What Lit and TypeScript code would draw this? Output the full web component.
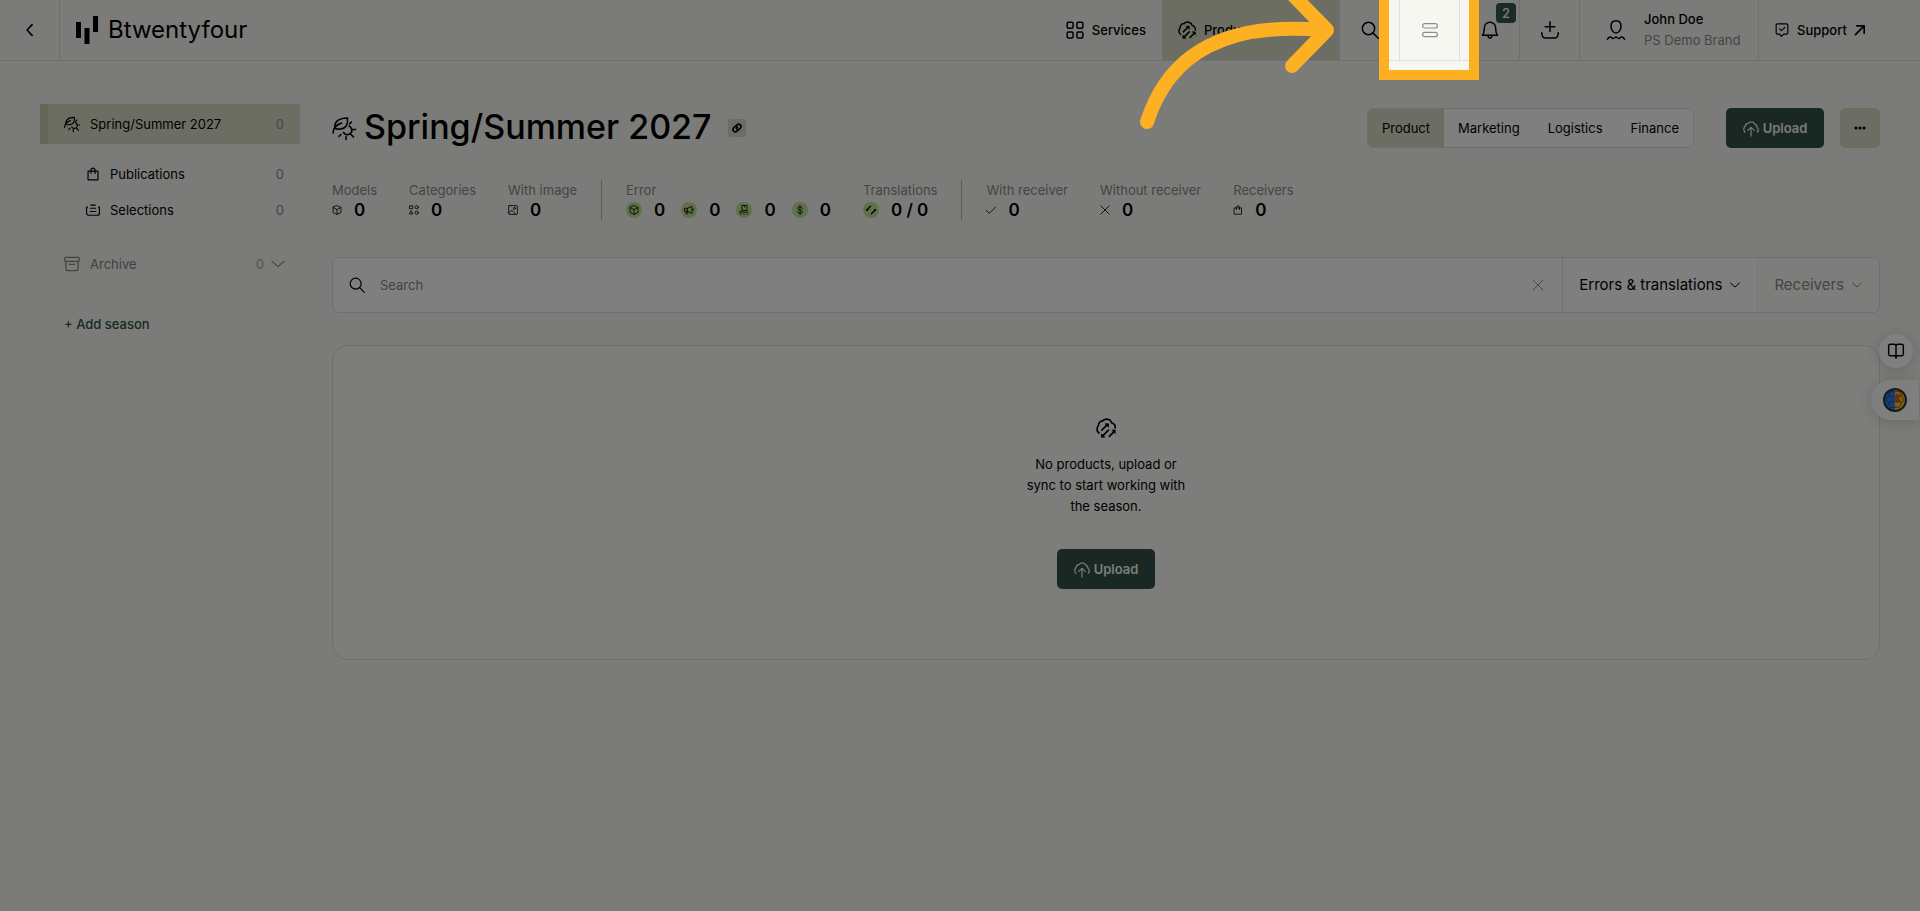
import { LitElement, html, css, svg } from "lit";
import { customElement, property } from "lit/decorators.js";

const shapes: Record<string, unknown> = {
  back: svg`<path d="M14.500 5.500 8.500 12l6 6.500" stroke-width="2"/>`,
  season: svg`<path d="M1 17c.2-5 3-8 8.500-10M3.500 12.500C1.500 7.500 5 2 15.500 2c.8 6-1.500 10.500-7 11-2 .2-3.500.3-5-.5z"/><path d="M17 10a4.500 4.500 0 1 1-5.500 6.500M17.500 8l2-2M20.500 13.500h3M14 20.500v3M19 18.500l2.500 2.500M9 18.500 7 20.500"/>`,
  bag: svg`<path d="M3.500 7h17v15h-17zM8.500 11V5.500a3.500 3.500 0 0 1 7 0V11"/>`,
  selection: svg`<path d="M2.500 7H1v10.500A3.500 3.500 0 0 0 4.500 21h15a3.500 3.500 0 0 0 3.500-3.500V7h-1.500M8 3.500h8M7.500 9h9M7.500 14.500h9"/>`,
  archive: svg`<rect x="1" y="2" width="22" height="6" rx="1.500"/><path d="M3 8v11a3 3 0 0 0 3 3h12a3 3 0 0 0 3-3V8M8.500 12.500h7"/>`,
  down: svg`<path d="m3 8 9 8 9-8"/>`,
  grid: svg`<rect x="1.500" y="1.500" width="8" height="8" rx="2"/><rect x="14.500" y="1.500" width="8" height="8" rx="2"/><rect x="1.500" y="14.500" width="8" height="8" rx="2"/><rect x="14.500" y="14.500" width="8" height="8" rx="2"/>`,
  sync: svg`<path d="M3.500 18A6 6 0 0 1 3 9a5 5 0 0 1 5-5.500 6.500 6.500 0 0 1 11 2.500 5 5 0 0 1 4 6M7 14.500l6-6M8 21.500l7-7M16 22l6-6"/><g fill="currentColor" stroke-width="1"><path d="M11.500 7H15v3.500zM6.500 19.500V23H10zM19.500 14.500H23V18z"/></g>`,
  search: svg`<circle cx="10" cy="10" r="8.200"/><path d="m16 16 7 7"/>`,
  rows: svg`<rect x="1" y="2.500" width="22" height="6.500" rx="3"/><rect x="1" y="15.500" width="22" height="6.500" rx="3"/>`,
  bell: svg`<path d="M2 19h20c-2.500-2.500-2-5-2.500-10a7.500 7.500 0 0 0-15 0C4 14 4.500 16.500 2 19zM9.500 20.500c.5 3 4.500 3 5 0"/>`,
  load: svg`<path d="M12 1v13M5.500 7.500h13M1 15.500c0 5 1.500 7 5 7h12c3.500 0 5-2 5-7"/>`,
  user: svg`<path d="M12 1c4.500 0 6.500 2.500 6.500 7s-3 9-6.500 9-6.500-4.500-6.500-9S7.500 1 12 1zM1 25c2-3.500 4-3.500 6-1.500 2 1.500 3 0 5-1.500 2 1.500 3 3 5 1.500 2-2 4-2 6 1.500"/>`,
  support: svg`<path d="M4 1.500h16a2 2 0 0 1 2 2V17a2 2 0 0 1-2 2h-5l-4 4-3-4H4a2 2 0 0 1-2-2V3.500a2 2 0 0 1 2-2z"/><path d="m8 10 3 3 6-5.500"/>`,
  out: svg`<path d="M1 23 22 2M4 2h18v18" stroke-width="4"/>`,
  upload: svg`<path d="M3 18.500A6.500 6.500 0 0 1 3.500 9 4.500 4.500 0 0 1 8 5a6 6 0 0 1 10 1.500 4.500 4.500 0 0 1 3 4.500 5 5 0 0 1 .5 7M12 24V11.500M7 15.500l5-4.500 5 4.500"/>`,
  dots: svg`<g fill="currentColor" stroke="none"><circle cx="4" cy="12" r="3"/><circle cx="12" cy="12" r="3"/><circle cx="20" cy="12" r="3"/></g>`,
  link: svg`<path stroke-width="4" d="M10 6.500 12.500 4c5-4 12 3 8 8l-3 3c-2.500 2-6 1-7-2M14 17.500 11.500 20c-5 4-12-3-8-8l3-3c2.500-2 6-1 7 2"/>`,
  box: svg`<path d="m12 1.500 9.500 4.500v12L12 22.500 2.500 18V6zM2.500 6l9.500 5 9.500-5M12 11v11.500"/>`,
  shapes: svg`<rect x="2" y="2" width="7" height="7"/><circle cx="18.500" cy="5.500" r="3.800"/><path d="m5.500 14.500 4 7h-8z"/><circle cx="18.500" cy="18.500" r="3.800"/>`,
  image: svg`<rect x="1.500" y="1.500" width="21" height="21" rx="1.500"/><circle cx="15.500" cy="8" r="2.500"/><path d="m3 19 6-7 9 9.500"/>`,
  horn: svg`<path d="M2 8h6l11-5v17L8 15H2zM8 8v7M5 15v6h4v-5M22 9v4"/>`,
  cart: svg`<path d="M8 1h11v12H8zM13.500 1v4M1 17h21M3 22h2M11 22h2M19 22h2M8 13l-4 4"/>`,
  dollar: svg`<path d="M18 8c-1-5-12-5-12 0s12 3 12 8-11 5-12 0M12 1v22"/>`,
  swap: svg`<path stroke-width="3" d="m2 12 9-9M13 21l9-9"/><g fill="currentColor"><circle cx="2.500" cy="12" r="1.500"/><circle cx="21.500" cy="12" r="1.500"/></g>`,
  check: svg`<path d="m1 13 7 7L23 5"/>`,
  cross: svg`<path d="m2 2 20 20M22 2 2 22"/>`,
  book: svg`<path stroke-width="2.200" d="M12 5c0-2-1-3-3-3H3.500C2 2 1 3 1 4.500v12C1 18 2 19 3.500 19H9c2 0 3 1 3 3 0-2 1-3 3-3h5.500c1.500 0 2.500-1 2.500-2.500v-12C23 3 22 2 20.500 2H15c-2 0-3 1-3 3zM12 5v18"/>`,
};

const icon = (name: string, size = "s16") => html`<svg
  class="icon ${size}" viewBox="0 0 24 ${name === "user" ? 26 : 24}" aria-hidden="true">${shapes[name]}</svg>`;

const base = css`
  * { box-sizing: border-box; }
  .icon { display: block; flex: none; fill: none; stroke: currentColor; stroke-width: 2; stroke-linecap: round; stroke-linejoin: round; overflow: visible; }
  .s10 { width: 10px; height: 10px; }
  .s12 { width: 12px; height: 12px; }
  .s14 { width: 14px; height: 14px; }
  .s16 { width: 16px; height: 16px; stroke-width: 1.8; }
  .s18 { width: 18px; height: 18px; }
  .s20 { width: 20px; height: 20px; }
  .s24 { width: 24px; height: 24px; stroke-width: 1.6; }
  button { font: inherit; color: inherit; border: 0; background: none; padding: 0; cursor: pointer; }
  a { color: inherit; text-decoration: none; }
`;

@customElement("top-bar")
class TopBar extends LitElement {
  static styles = [base, css`
    :host { display: block; }
    .bar { display: flex; height: 61px; border-bottom: 1px solid #dededc; font-weight: 500; }
    .cell { display: flex; align-items: center; justify-content: center; width: 60px; border-right: 1px solid #dededc; }
    .cell.tool { position: relative; }
    .logo { display: flex; align-items: center; gap: 10px; padding-left: 16px; font-size: 24px; font-weight: 400; margin-right: auto; }
    .mark { width: 22px; height: 28px; }
    .item { display: flex; align-items: center; gap: 8px; padding: 0 16px; }
    .current { background: #dbdcc7; width: 178px; border-right: 1px solid #dededc; }
    .rows { color: #8c8c8a; }
    .badge { position: absolute; top: 3px; right: 3px; width: 20px; height: 20px; border-radius: 4px; background: #36574c; color: #f7f8f3; line-height: 20px; text-align: center; }
    .account { display: flex; align-items: center; gap: 18px; width: 179px; padding: 0 16px 0 26px; border-right: 1px solid #dededc; text-align: left; line-height: 21px; white-space: nowrap; }
    .brand { color: #8a8a88; font-weight: 400; }
    .support { width: 161px; }
    .focus { position: absolute; z-index: 20; top: -10px; left: -21px; width: 100px; height: 90px; border: 10px solid #fdb022; box-shadow: 0 0 0 4000px rgba(0, 0, 0, 0.5); pointer-events: none; }
    .arrow { position: absolute; top: 0; right: 140px; width: 210px; height: 140px; overflow: visible; fill: none; stroke: #fdb022; stroke-width: 14; stroke-linecap: round; stroke-linejoin: round; }
  `];
  render() {
    return html`<header class="bar">
      <button class="cell" aria-label="Back">${icon("back", "s20")}</button>
      <a class="logo" href="#">
        <svg class="mark" viewBox="0 0 22 28" aria-hidden="true"><path d="M0 6h5v16H0zM8.500 12h5v16h-5zM17 0h5v16h-5z"/></svg>
        Btwentyfour
      </a>
      <a class="item" href="#">${icon("grid", "s18")}Services</a>
      <a class="item current" href="#">${icon("sync", "s18")}Products</a>
      <button class="cell" aria-label="Search">${icon("search", "s18")}</button>
      <div class="cell tool">
        <button class="rows" aria-label="Lists">${icon("rows", "s16")}</button>
        <div class="focus">
          <svg class="arrow" viewBox="0 0 210 140" aria-hidden="true"><path d="M28 122C51 50 111 22 203 30M173 -6l35 36-35 36"/></svg>
        </div>
      </div>
      <button class="cell tool" aria-label="Notifications">${icon("bell", "s18")}<span class="badge">2</span></button>
      <button class="cell" aria-label="Import">${icon("load", "s18")}</button>
      <button class="account">${icon("user", "s20")}<span>John Doe<br /><span class="brand">PS Demo Brand</span></span></button>
      <a class="item support" href="#">${icon("support", "s14")}Support${icon("out", "s10")}</a>
    </header>`;
  }
}

@customElement("season-nav")
class SeasonNav extends LitElement {
  static styles = [base, css`
    :host { display: block; width: 260px; flex: none; }
    .row { display: flex; align-items: center; gap: 10px; height: 36px; padding-right: 16px; }
    .season { height: 40px; padding-left: 16px; border-left: 8px solid #c6cdaa; background: #dbdcc7; margin-bottom: 12px; }
    .sub { padding-left: 46px; }
    .count { margin-left: auto; color: #8a8a88; }
    .archive { width: 100%; height: 40px; padding-left: 24px; padding-right: 14px; margin: 16px 0 20px; color: #82827f; }
    .archive .count { color: #a3a3a0; margin-right: -4px; }
    .add { height: 40px; padding-left: 24px; color: #2c5344; font-weight: 500; gap: 4px; }
  `];
  render() {
    return html`<nav>
      <a class="row season" href="#">${icon("season")}Spring/Summer 2027<span class="count">0</span></a>
      <a class="row sub" href="#">${icon("bag", "s14")}Publications<span class="count">0</span></a>
      <a class="row sub" href="#">${icon("selection", "s14")}Selections<span class="count">0</span></a>
      <button class="row archive">${icon("archive")}Archive<span class="count">0</span>${icon("down")}</button>
      <button class="row add">+ Add season</button>
    </nav>`;
  }
}

@customElement("season-stats")
class SeasonStats extends LitElement {
  static styles = [base, css`
    :host { display: block; }
    .stats, .group, .values, .value { display: flex; }
    .group { gap: 32px; }
    .group + .group { border-left: 1px solid #b4b4b0; margin-left: 24px; padding-left: 24px; }
    .stat { line-height: 20px; color: #8a8a88; white-space: nowrap; }
    .values { gap: 16px; }
    .value { align-items: center; gap: 12px; font-size: 17px; font-weight: 600; color: #000; }
    .dot { display: grid; place-items: center; width: 16px; height: 16px; border-radius: 50%; background: #bfe391; }
  `];
  render() {
    const groups = [
      [["Models", ["box"], "0"], ["Categories", ["shapes"], "0"], ["With image", ["image"], "0"]],
      [["Error", ["box", "horn", "cart", "dollar"], "0", true], ["Translations", ["swap"], "0 / 0", true]],
      [["With receiver", ["check"], "0"], ["Without receiver", ["cross"], "0"], ["Receivers", ["bag"], "0"]],
    ] as [string, string[], string, boolean?][][];
    return html`<div class="stats">${groups.map((g) => html`<div class="group">${g.map(([label, icons, value, dot]) => html`
      <div class="stat">${label}
        <div class="values">${icons.map((i) => html`<span class="value">${dot
          ? html`<span class="dot">${icon(i, "s10")}</span>` : icon(i, "s10")}${value}</span>`)}</div>
      </div>`)}</div>`)}</div>`;
  }
}

@customElement("upload-button")
class UploadButton extends LitElement {
  static styles = [base, css`
    :host { display: block; }
    .upload { display: flex; align-items: center; justify-content: center; gap: 4px; width: 98px; height: 40px; border-radius: 5px; background: #335145; color: #f7f8f3; font-weight: 600; }
  `];
  render() { return html`<button class="upload">${icon("upload")}Upload</button>`; }
}

@customElement("app-root")
class AppRoot extends LitElement {
  @property() tab = "Product";
  static styles = [base, css`
    :host { display: block; position: relative; min-height: 100vh; overflow: hidden; background: #f7f7f2; color: #000; font: 13px/20px Inter, "Liberation Sans", sans-serif; }
    .page { display: flex; gap: 32px; padding: 43px 40px 40px; }
    .main { flex: 1; min-width: 0; }
    .heading { display: flex; align-items: center; height: 48px; margin-bottom: 28px; }
    .title { margin: 0 16px 0 8px; font-size: 34px; line-height: 46px; padding-bottom: 2px; font-weight: 500; }
    .link { display: grid; place-items: center; width: 18px; height: 18px; border-radius: 2px; background: #dbdcc7; }
    .tabs { display: flex; height: 40px; margin-left: auto; border: 1px solid #dededc; border-radius: 6px; background: #fff; overflow: hidden; }
    .tab { padding: 0 14px; }
    .tab.on { background: #dbdcc7; }
    upload-button { margin: 0 16px 0 32px; }
    .more { display: grid; place-items: center; width: 40px; height: 40px; border-radius: 5px; background: #dbdcc7; }
    .filters { display: flex; height: 56px; margin: 37px 0 32px; border: 1px solid #dededf; border-radius: 7px; background: #fff; overflow: hidden; }
    .search { flex: 1; display: flex; align-items: center; gap: 15px; padding: 0 18px 0 16px; }
    .query { flex: 1; border: 0; outline: 0; padding: 0; background: none; font: inherit; }
    .query::placeholder { color: #85858a; opacity: 1; }
    .clear { color: #8a8a88; }
    .filter { display: flex; align-items: center; gap: 7px; padding: 0 16px; border-left: 1px solid #dededf; font-size: 15px; }
    .off { background: #fafaf7; color: #8a8a88; border-color: #efefed; }
    .panel { display: flex; flex-direction: column; align-items: center; padding: 72px 0 70px; border: 1px solid #dededc; border-radius: 16px; background: #fbfbf7; }
    .empty { width: 168px; margin: 16px 0 32px; line-height: 21px; text-align: center; }
    .panel upload-button { margin: 0; }
    .side { position: absolute; top: 334px; right: 0; display: flex; flex-direction: column; align-items: flex-end; gap: 12px; }
    .guide, .helper { display: grid; place-items: center; background: #fff; box-shadow: 0 2px 16px rgba(0, 0, 0, 0.16); }
    .guide { width: 34px; height: 34px; border-radius: 50%; margin-right: 7px; }
    .helper { width: 48px; height: 40px; border-radius: 20px 0 0 20px; margin-right: 1px; }
    .brain { width: 24px; height: 24px; }
  `];
  render() {
    return html`
      <top-bar></top-bar>
      <div class="page">
        <season-nav></season-nav>
        <main class="main">
          <div class="heading">
            ${icon("season", "s24")}
            <h1 class="title">Spring/Summer 2027</h1>
            <button class="link" aria-label="Copy link">${icon("link", "s10")}</button>
            <div class="tabs">${["Product", "Marketing", "Logistics", "Finance"].map((t) => html`
              <button class="tab ${t === this.tab ? "on" : ""}" @click=${() => (this.tab = t)}>${t}</button>`)}</div>
            <upload-button></upload-button>
            <button class="more" aria-label="More">${icon("dots", "s12")}</button>
          </div>
          <season-stats></season-stats>
          <div class="filters">
            <label class="search">${icon("search")}<input class="query" placeholder="Search" aria-label="Search" />
              <button class="clear" aria-label="Clear">${icon("cross", "s12")}</button></label>
            <button class="filter">Errors &amp; translations${icon("down", "s12")}</button>
            <button class="filter off">Receivers${icon("down", "s12")}</button>
          </div>
          <section class="panel">
            ${icon("sync", "s20")}
            <p class="empty">No products, upload or sync to start working with the season.</p>
            <upload-button></upload-button>
          </section>
        </main>
      </div>
      <div class="side">
        <button class="guide" aria-label="Guide">${icon("book")}</button>
        <button class="helper" aria-label="Assistant">
          <svg class="brain" viewBox="0 0 24 24" aria-hidden="true">
            <circle cx="12" cy="12" r="11" fill="#2f7fe8"/><path d="M12 1a11 11 0 0 1 0 22z" fill="#ffc21a"/>
            <path d="M12 7c4-3 6 1 4 4 4 1 1 5-4 3z" fill="#e8602a"/>
            <path d="M12 4c-4-2-7 1-6 4-3 1-3 6 0 7 0 4 3 5 6 4M6 8c2-1 4 0 4 2M6 15c1-2 3-2 5-1" fill="none" stroke="#164a9c"/>
            <path d="M12 4c4-2 7 1 6 4 3 1 3 6 0 7 0 4-3 5-6 4M18 8c-2-1-4 0-4 2M18 15c-1-2-3-2-5-1" fill="none" stroke="#8a5a10"/>
            <circle cx="12" cy="12" r="11" fill="none" stroke="#333" stroke-width="2"/>
          </svg>
        </button>
      </div>`;
  }
}
